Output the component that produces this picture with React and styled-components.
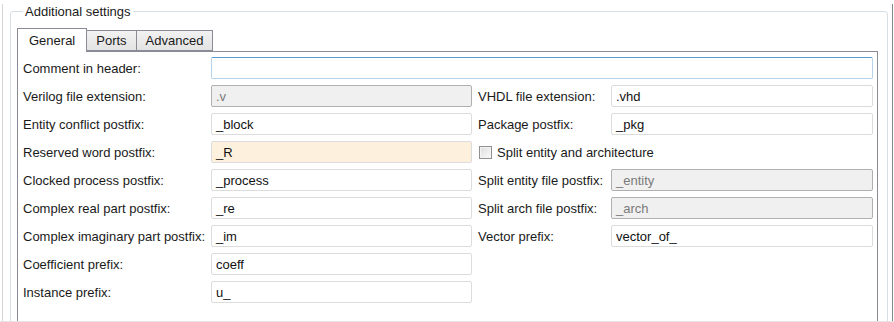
import styled, { createGlobalStyle } from "styled-components";

const GlobalStyle = createGlobalStyle`
  html, body {
    margin: 0;
    padding: 0;
    background: #ffffff;
  }
  body {
    font-family: "Liberation Sans", Arial, sans-serif;
    font-size: 13px;
    color: #1a1a1a;
  }
`;

const Frame = styled.div`
  box-sizing: border-box;
  width: 894px;
  height: 322px;
  overflow: hidden;
  padding: 0 1px 0 2px;
  border-bottom: 1px solid #e6e6e6;
`;

const Panel = styled.div`
  box-sizing: border-box;
  height: 340px;
  border-left: 1px solid #d4d4d4;
  border-right: 1px solid #85878c;
  padding: 0 4px 0 7px;
`;

const GroupBox = styled.fieldset`
  box-sizing: border-box;
  margin: 4px 0 0 0;
  padding: 0 9px 0 6px;
  height: 340px;
  border: 1px solid #d5dfe5;
  border-radius: 3px;
  min-width: 0;
`;

const GroupTitle = styled.legend`
  margin-left: 6px;
  padding: 0 2px;
  line-height: 15px;
  color: #1a1a1a;
`;

const TabStrip = styled.div`
  display: flex;
  align-items: flex-end;
  height: 23px;
  margin-top: 9px;
  position: relative;
  z-index: 1;
`;

const Tab = styled.div`
  box-sizing: border-box;
  height: ${p => (p.$active ? "24px" : "21px")};
  padding: ${p => (p.$active ? "4px 11px 0" : "2px 9px 0")};
  margin-bottom: ${p => (p.$active ? "-1px" : "0")};
  border: 1px solid #898c95;
  border-bottom: ${p => (p.$active ? "none" : "1px solid #898c95")};
  border-left-width: ${p => (p.$first ? "1px" : "0")};
  background: ${p =>
    p.$active ? "#ffffff" : "linear-gradient(#f2f2f2, #e3e3e3)"};
  line-height: 15px;
  color: #1a1a1a;
  white-space: nowrap;
`;

const TabPane = styled.div`
  box-sizing: border-box;
  height: 300px;
  border: 1px solid #898c95;
  padding: 5px 4px 0 5px;
  display: grid;
  grid-template-columns: 188px 261px 139px 1fr;
  grid-auto-rows: 22px;
  row-gap: 6px;
  align-items: center;
`;

const Label = styled.div`
  padding-left: ${p => (p.$right ? "6px" : "0")};
  white-space: nowrap;
  color: #1a1a1a;
`;

const Field = styled.div`
  box-sizing: border-box;
  height: 22px;
  grid-column: ${p => p.$span || "auto"};
  padding: 0 4px;
  display: flex;
  align-items: center;
  border: 1px solid
    ${p => (p.$disabled ? "#b0b0b0" : p.$focus ? "#b5d3ec" : "#dcdcdc")};
  border-top-color: ${p =>
    p.$disabled ? "#b0b0b0" : p.$focus ? "#569ad0" : "#dcdcdc"};
  border-radius: 2px;
  background: ${p =>
    p.$disabled ? "#f0f0f0" : p.$warn ? "#fdf1de" : "#ffffff"};
  color: ${p => (p.$disabled ? "#7a7a7a" : "#111111")};
  white-space: nowrap;
`;

const CheckRow = styled.label`
  grid-column: 3 / 5;
  display: flex;
  align-items: center;
  gap: 5px;
  padding-left: 7px;
  color: #1a1a1a;
`;

const CheckBox = styled.span`
  box-sizing: border-box;
  width: 13px;
  height: 13px;
  border: 1px solid #8e8f8f;
  background: linear-gradient(135deg, #dcdcdc, #fbfbfb);
  box-shadow: inset 0 0 0 1px #f4f4f4;
`;

const rows = [
  { left: ["Verilog file extension:", ".v", "disabled"], right: ["VHDL file extension:", ".vhd"] },
  { left: ["Entity conflict postfix:", "_block"], right: ["Package postfix:", "_pkg"] },
  { left: ["Reserved word postfix:", "_R", "warn"], check: "Split entity and architecture" },
  { left: ["Clocked process postfix:", "_process"], right: ["Split entity file postfix:", "_entity", "disabled"] },
  { left: ["Complex real part postfix:", "_re"], right: ["Split arch file postfix:", "_arch", "disabled"] },
  { left: ["Complex imaginary part postfix:", "_im"], right: ["Vector prefix:", "vector_of_"] },
  { left: ["Coefficient prefix:", "coeff"] },
  { left: ["Instance prefix:", "u_"] },
];

function Input({ value, kind, span }) {
  return (
    <Field $disabled={kind === "disabled"} $warn={kind === "warn"} $span={span}>
      {value}
    </Field>
  );
}

export default function App() {
  return (
    <>
      <GlobalStyle />
      <Frame>
        <Panel>
          <GroupBox>
            <GroupTitle>Additional settings</GroupTitle>
            <TabStrip>
              <Tab $active $first>General</Tab>
              <Tab>Ports</Tab>
              <Tab>Advanced</Tab>
            </TabStrip>
            <TabPane>
              <Label>Comment in header:</Label>
              <Field $focus $span="2 / 5" />
              {rows.map((r) => (
                <Row key={r.left[0]} row={r} />
              ))}
            </TabPane>
          </GroupBox>
        </Panel>
      </Frame>
    </>
  );
}

function Row({ row }) {
  const [label, value, kind] = row.left;
  return (
    <>
      <Label>{label}</Label>
      <Input value={value} kind={kind} />
      {row.right && (
        <>
          <Label $right>{row.right[0]}</Label>
          <Input value={row.right[1]} kind={row.right[2]} />
        </>
      )}
      {row.check && (
        <CheckRow>
          <CheckBox />
          {row.check}
        </CheckRow>
      )}
      {!row.right && !row.check && <span style={{ gridColumn: "3 / 5" }} />}
    </>
  );
}
